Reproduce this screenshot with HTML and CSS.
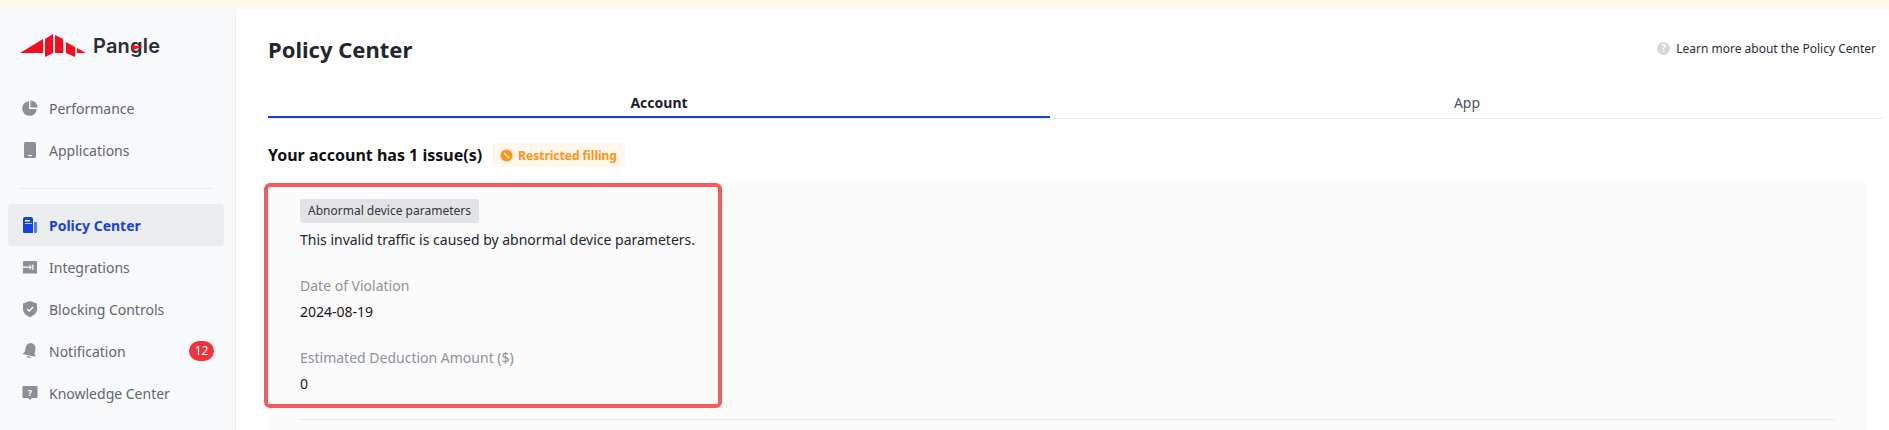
FILE: index.html
```html
<!DOCTYPE html>
<html lang="en">
<head>
<meta charset="utf-8">
<title>Policy Center</title>
<link rel="stylesheet" href="styles.css">
</head>
<body>
<div class="strip"></div>
<div class="shell">
  <aside class="sidebar">
    <div class="logo">
      <svg class="logo-mark" width="68" height="24" viewBox="20 34 68 24"><g fill="#fe0a1e"><path d="M20 53 43 39V53Z"/><path d="M45 39 53 34V53L45 57Z"/><path d="M55 35 63 39V53H55Z"/><path d="M66 42 75 47V57L66 53Z"/><path d="M77 48 86 53H77Z"/></g></svg>
      <span class="logo-text">Pangle<svg class="logo-accent" width="11" height="5" viewBox="0 0 11 5"><path fill="#fe0a1e" d="M0 0 11 2 0 5Z"/></svg></span>
    </div>
    <nav class="nav">
      <a class="nav-item"><svg class="ico" viewBox="0 0 16 16"><path fill="#8c8f98" d="M7 1.200A7.300 7.300 0 1 0 14.800 9H7Z"/><path fill="#8c8f98" d="M8.500 .4A7.300 7.300 0 0 1 15.600 7.500H8.500Z"/></svg>Performance</a>
      <a class="nav-item"><svg class="ico" viewBox="0 0 16 16"><rect x="2" y="0" width="12" height="16" rx="1.500" fill="#8c8f98"/><rect x="6" y="13" width="4" height="1" fill="#fff"/></svg>Applications</a>
      <div class="nav-sep"></div>
      <a class="nav-item active"><svg class="ico" viewBox="0 0 16 16"><path fill="#1544dc" d="M1 2a2 2 0 0 1 2-2h6a2 2 0 0 1 2 2v14H2a1 1 0 0 1-1-1Z"/><path fill="#5b7be6" d="M12 5h2a1 1 0 0 1 1 1v9a1 1 0 0 1-1 1h-2Z"/><rect x="3" y="3" width="5" height="1.500" fill="#fff"/><rect x="3" y="6" width="7" height="1" fill="#b9c6f3"/></svg>Policy Center</a>
      <a class="nav-item"><svg class="ico" viewBox="0 0 16 16"><rect x="1" y="2" width="14" height="12.500" rx=".5" fill="#8c8f98"/><path fill="none" stroke="#f8f9fb" stroke-width="1.300" d="M1 8.200H8.500"/><path fill="#f8f9fb" d="M7.500 5.500 10 8.200 7.500 11Z"/><rect x="10.200" y="5.500" width="1.300" height="5.500" fill="#f8f9fb"/></svg>Integrations</a>
      <a class="nav-item"><svg class="ico" viewBox="0 0 16 16"><path fill="#8c8f98" d="M8 0 15 2.500V8c0 4-3 6.500-7 8-4-1.500-7-4-7-8V2.500Z"/><path fill="none" stroke="#fff" stroke-width="1.300" d="M5 8 7.300 10 11 6"/></svg>Blocking Controls</a>
      <a class="nav-item"><svg class="ico" viewBox="0 0 16 16"><g transform="rotate(12 8 8)"><path fill="#8c8f98" d="M8 0C11.500 0 13 3 13 6V10L15 12.500H1L3 10V6C3 3 4.500 0 8 0Z"/><rect x="6" y="13.500" width="4" height="1.500" rx=".7" fill="#8c8f98"/></g></svg>Notification<span class="count">12</span></a>
      <a class="nav-item"><svg class="ico" viewBox="0 0 16 16"><path fill="#8c8f98" d="M1.500 1h13a1 1 0 0 1 1 1v10a1 1 0 0 1-1 1H10L8 15 6 13H1.500a1 1 0 0 1-1-1V2a1 1 0 0 1 1-1Z"/><text class="ico-q" x="8" y="10.500" text-anchor="middle">?</text></svg>Knowledge Center</a>
    </nav>
  </aside>
  <main class="main">
    <header class="head">
      <h1 class="title">Policy Center</h1>
      <a class="learn"><span class="learn-ico">?</span>Learn more about the Policy Center</a>
    </header>
    <div class="tabs">
      <div class="tab current">Account</div>
      <div class="tab">App</div>
    </div>
    <div class="issue-row">
      <h2 class="issue-title">Your account has 1 issue(s)</h2>
      <span class="status"><svg class="status-ico" viewBox="0 0 14 14"><circle cx="7" cy="7" r="6.500" fill="#ff9416"/><path d="M4.300 4.300 9.700 9.700" stroke="#fff" stroke-width="1.500"/></svg>Restricted filling</span>
    </div>
    <section class="panel">
      <div class="annot"></div>
      <span class="tag">Abnormal device parameters</span>
      <p class="desc">This invalid traffic is caused by abnormal device parameters.</p>
      <div class="label">Date of Violation</div>
      <div class="value">2024-08-19</div>
      <div class="label">Estimated Deduction Amount ($)</div>
      <div class="value">0</div>
      <div class="rule"></div>
    </section>
  </main>
</div>
</body>
</html>
```
FILE: styles.css
```css
* { box-sizing: border-box; }
html, body { margin: 0; height: 100%; overflow: hidden; background: #fff; }
body { font-family: "Noto Sans", "Open Sans", sans-serif; font-size: 14px; color: #1d2129; }
.strip { height: 9px; background: #fff6ec; }
.shell { display: flex; height: 421px; overflow: hidden; }
.sidebar { width: 236px; flex: none; background: #f8f9fb; border-right: 1px solid #eceef1; }
.logo { display: flex; align-items: center; height: 48px; margin: 13px 0 0 20px; gap: 5px; }
.logo-mark { display: block; }
.logo-text { position: relative; font-family: Inter, sans-serif; font-weight: 600; font-size: 20px; line-height: 24px; letter-spacing: .2px; color: #2a2d33; }
.logo-accent { position: absolute; left: 39px; top: 11px; }
.nav { margin-top: 17px; padding: 0 11px 0 8px; }
.nav-item { display: flex; align-items: center; height: 42px; padding-left: 14px; color: #62666f; border-radius: 4px; }
.nav-item .ico { width: 16px; height: 16px; margin-right: 11px; flex: none; }
.nav-item.active { background: #ebecee; color: #1544dc; font-weight: 700; }
.ico-q { font-size: 9px; font-weight: 700; fill: #fff; }
.nav-sep { height: 1px; margin: 17px 12px 15px; background: #e7e9ed; }
.count { margin-left: auto; margin-right: 10px; min-width: 25px; height: 20px; line-height: 20px; text-align: center; border-radius: 10px; background: #f5323c; color: #fff; font-size: 12px; }
.main { flex: 1; min-width: 0; padding: 0 5px 0 32px; }
.head { display: flex; justify-content: space-between; align-items: center; height: 81px; padding: 0 8px 2px 0; }
.title { margin: 0; font-size: 22px; font-weight: 700; color: #22262e; }
.learn { display: flex; align-items: center; font-size: 12px; color: #2b2e35; }
.learn-ico { width: 13px; height: 13px; margin-right: 6px; border-radius: 50%; background: #d5d6d9; color: #fff; font-size: 10px; font-weight: 700; line-height: 13px; text-align: center; }
.tabs { display: grid; grid-template-columns: 782px 834px; height: 29px; border-bottom: 1px solid #e8e9eb; }
.tab { text-align: center; font-size: 14px; line-height: 26px; color: #4e5259; }
.tab.current { font-weight: 700; color: #1d2129; border-bottom: 2px solid #1544dc; height: 28px; }
.issue-row { display: flex; align-items: center; gap: 10px; height: 24px; margin-top: 24px; }
.issue-title { margin: 0; font-size: 16px; font-weight: 700; color: #111; }
.status { display: flex; align-items: center; height: 24px; padding: 0 8px; border-radius: 3px; background: #fff6ec; color: #ff9416; font-size: 12px; font-weight: 700; }
.status-ico { width: 13px; height: 13px; margin-right: 5px; }
.panel { position: relative; width: 1599px; margin-top: 16px; padding: 16px 32px 40px; background: #fbfbfc; }
.annot { position: absolute; left: -4px; top: 0; width: 458px; height: 225px; border: 4px solid #f45b5b; border-radius: 6px; }
.tag { display: inline-block; height: 24px; padding: 0 8px; line-height: 24px; border-radius: 3px; background: #e1e3e6; font-size: 12px; color: #33363d; vertical-align: top; }
.desc { margin: 6px 0 0; line-height: 22px; color: #22262e; }
.label { margin-top: 24px; line-height: 22px; color: #8d919a; }
.value { margin-top: 4px; line-height: 22px; color: #16181d; }
.rule { margin-top: 24px; height: 1px; background: #e8e9eb; }
```
